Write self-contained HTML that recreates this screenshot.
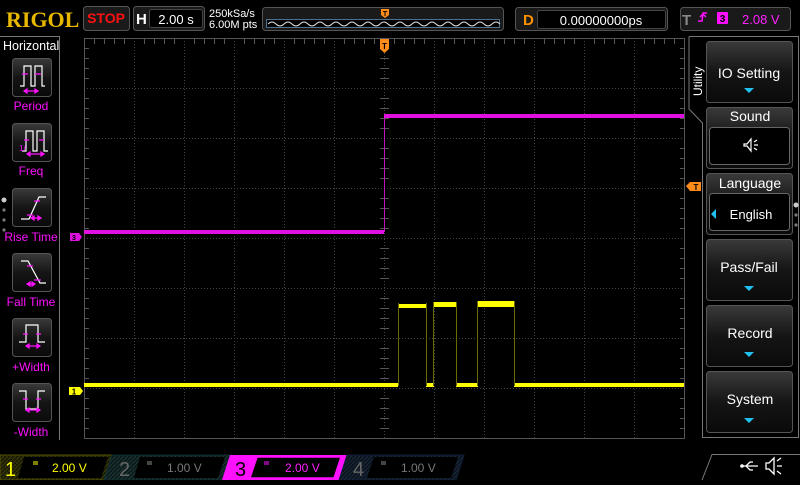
<!DOCTYPE html>
<html><head><meta charset="utf-8"><style>
body{margin:0;background:#000;width:800px;height:480px;overflow:hidden;font-family:"Liberation Sans",sans-serif}
svg text{font-family:"Liberation Sans",sans-serif}
</style></head><body>
<svg width="800" height="480" xmlns="http://www.w3.org/2000/svg">
<defs>
<linearGradient id="btn" x1="0" y1="0" x2="0" y2="1"><stop offset="0" stop-color="#3a3a3a"/><stop offset="0.5" stop-color="#151515"/><stop offset="1" stop-color="#0a0a0a"/></linearGradient>
<pattern id="h1" width="4" height="4" patternUnits="userSpaceOnUse"><rect width="4" height="4" fill="#1c1c00"/><path d="M0 4L4 0" stroke="#3a3a10" stroke-width="1"/></pattern>
<pattern id="h2" width="4" height="4" patternUnits="userSpaceOnUse"><rect width="4" height="4" fill="#0c1c1c"/><path d="M0 4L4 0" stroke="#1f3535" stroke-width="1"/></pattern>
<pattern id="h4" width="4" height="4" patternUnits="userSpaceOnUse"><rect width="4" height="4" fill="#0c1420"/><path d="M0 4L4 0" stroke="#1b2838" stroke-width="1"/></pattern>
</defs>
<!-- header -->
<text x="6" y="27" font-weight="bold" font-size="22" fill="#e8b800" style="font-family:'Liberation Serif',serif">RIGOL</text>
<rect x="83.5" y="6.5" width="46" height="24" rx="3" fill="#1a1a1a" stroke="#555"/>
<text x="106" y="23" text-anchor="middle" font-size="14" font-weight="bold" fill="#ff1010">STOP</text>
<rect x="133.5" y="6.5" width="71" height="24" rx="3" fill="#1a1a1a" stroke="#555"/>
<text x="136" y="24" font-size="15" font-weight="bold" fill="#fff">H</text>
<rect x="149.5" y="9.5" width="53" height="18" rx="2" fill="#000" stroke="#444"/>
<text x="176" y="24" text-anchor="middle" font-size="13" fill="#fff">2.00 s</text>
<text x="209" y="17" font-size="11" fill="#fff">250kSa/s</text>
<text x="209" y="28" font-size="11" fill="#fff">6.00M pts</text>
<rect x="262.5" y="7.5" width="241" height="23" rx="3" fill="#1a1a1a" stroke="#555"/>
<rect x="266.5" y="19.5" width="233" height="8" fill="#000" stroke="#4a7090"/>
<path d="M268 24 q4 -4 8 0 t8 0 t8 0 t8 0 t8 0 t8 0 t8 0 t8 0 t8 0 t8 0 t8 0 t8 0 t8 0 t8 0 t8 0 t8 0 t8 0 t8 0 t8 0 t8 0 t8 0 t8 0 t8 0 t8 0 t8 0 t8 0 t8 0 t8 0 t8 0" stroke="#ddd" fill="none" stroke-width="1"/>
<path d="M381 9h8v6l-4 3l-4-3z" fill="#ff8c1a"/><text x="385" y="16" text-anchor="middle" font-size="7" fill="#000" font-weight="bold">T</text>
<rect x="515.5" y="7.5" width="152" height="23" rx="3" fill="#1a1a1a" stroke="#555"/>
<text x="523" y="25" font-size="15" font-weight="bold" fill="#ff9000">D</text>
<rect x="537.5" y="10.5" width="128" height="18" rx="2" fill="#000" stroke="#444"/>
<text x="601" y="25" text-anchor="middle" font-size="13" fill="#fff">0.00000000ps</text>
<rect x="680.5" y="7.5" width="110" height="23" rx="3" fill="#1a1a1a" stroke="#555"/>
<text x="682" y="25" font-size="15" font-weight="bold" fill="#888">T</text>
<path d="M698 21h4l1-8h4M700 17l3-3l3 3" stroke="#ff10ff" fill="none" stroke-width="1.5"/>
<rect x="717" y="12" width="11" height="12" rx="1" fill="#ff10ff"/><text x="722.5" y="22" text-anchor="middle" font-size="10" fill="#000" font-weight="bold">3</text>
<text x="742" y="24" font-size="13" fill="#ff20ff">2.08 V</text>
<!-- left panel -->
<path d="M0 36.5H59.5V440" stroke="#777" fill="none"/>
<text x="3" y="50" font-size="12.5" fill="#fff">Horizontal</text>
<g fill="url(#btn)" stroke="#555">
<rect x="12.5" y="58.5" width="39" height="38" rx="3"/>
<rect x="12.5" y="123.5" width="39" height="38" rx="3"/>
<rect x="12.5" y="188.5" width="39" height="38" rx="3"/>
<rect x="12.5" y="253.5" width="39" height="38" rx="3"/>
<rect x="12.5" y="318.5" width="39" height="38" rx="3"/>
<rect x="12.5" y="383.5" width="39" height="38" rx="3"/>
</g>
<g stroke="#fff" fill="none" stroke-width="1.2">
<path d="M20 86h4v-20h7v20h4v-20h7v20h3"/>
<path d="M22 151h4v-20h7v20h4v-20h7v20h4"/>
<path d="M21 219h8l10-22h7"/>
<path d="M21 261h7l12 22h6"/>
<path d="M19 342h7v-17h12v17h7"/>
<path d="M19 391h7v18h12v-18h7"/>
</g>
<g stroke="#ff10ff" fill="#ff10ff" stroke-width="1.2">
<path d="M22 74h6M35 74h6M24 91h14"/><path d="M24 91l3-2v4zM38 91l-3-2v4z"/>
<path d="M24 140h5M39 140h5M27 154h17"/><path d="M27 154l3-2v4zM44 154l-3-2v4z"/>
<text x="19" y="151" font-size="8" stroke="none">1/</text>
<path d="M34 201h6M27 215h6M31 218h10"/><path d="M31 218l3-2v4zM41 218l-3-2v4z"/>
<path d="M27 266h6M34 280h7M27 284h8"/><path d="M27 284l3-2v4zM35 284l-3-2v4z"/>
<path d="M23 334h5M36 334h5M26 346h14"/><path d="M26 346l3-2v4zM40 346l-3-2v4z"/>
<path d="M23 399h5M36 399h5M26 410h14"/><path d="M26 410l3-2v4zM40 410l-3-2v4z"/>
</g>
<g font-size="12" fill="#ff10ff" text-anchor="middle">
<text x="31" y="110">Period</text><text x="31" y="175">Freq</text><text x="31" y="241">Rise Time</text>
<text x="31" y="306">Fall Time</text><text x="31" y="371">+Width</text><text x="31" y="436">-Width</text>
</g>
<circle cx="4" cy="200" r="2.5" fill="#ccc"/><circle cx="4" cy="210" r="1.6" fill="#777"/><circle cx="4" cy="220" r="1.6" fill="#777"/><circle cx="4" cy="230" r="1.6" fill="#777"/>
<!-- grid -->
<g stroke="#444" stroke-width="1" stroke-dasharray="1 2">
<path d="M134.5 38V438M184.5 38V438M234.5 38V438M284.5 38V438M334.5 38V438M434.5 38V438M484.5 38V438M534.5 38V438M584.5 38V438M634.5 38V438"/>
<path d="M84 88.5H684M84 138.5H684M84 188.5H684M84 288.5H684M84 338.5H684M84 388.5H684"/>
<path d="M384.5 38V438M84 238.5H684"/>
</g>
<rect x="84.5" y="38.5" width="600" height="400" fill="none" stroke="#555"/>
<g stroke="#555">
<path d="M94.5 39v5M104.5 39v5M114.5 39v5M124.5 39v5M144.5 39v5M154.5 39v5M164.5 39v5M174.5 39v5M194.5 39v5M204.5 39v5M214.5 39v5M224.5 39v5M244.5 39v5M254.5 39v5M264.5 39v5M274.5 39v5M294.5 39v5M304.5 39v5M314.5 39v5M324.5 39v5M344.5 39v5M354.5 39v5M364.5 39v5M374.5 39v5M394.5 39v5M404.5 39v5M414.5 39v5M424.5 39v5M444.5 39v5M454.5 39v5M464.5 39v5M474.5 39v5M494.5 39v5M504.5 39v5M514.5 39v5M524.5 39v5M544.5 39v5M554.5 39v5M564.5 39v5M574.5 39v5M594.5 39v5M604.5 39v5M614.5 39v5M624.5 39v5M644.5 39v5M654.5 39v5M664.5 39v5M674.5 39v5"/>
<path d="M85 48.5h4M85 58.5h4M85 68.5h4M85 78.5h4M85 98.5h4M85 108.5h4M85 118.5h4M85 128.5h4M85 148.5h4M85 158.5h4M85 168.5h4M85 178.5h4M85 198.5h4M85 208.5h4M85 218.5h4M85 228.5h4M85 248.5h4M85 258.5h4M85 268.5h4M85 278.5h4M85 298.5h4M85 308.5h4M85 318.5h4M85 328.5h4M85 348.5h4M85 358.5h4M85 368.5h4M85 378.5h4M85 398.5h4M85 408.5h4M85 418.5h4M85 428.5h4"/>
<path d="M380 48.5h9M380 58.5h9M380 68.5h9M380 78.5h9M380 98.5h9M380 108.5h9M380 118.5h9M380 128.5h9M380 148.5h9M380 158.5h9M380 168.5h9M380 178.5h9M380 198.5h9M380 208.5h9M380 218.5h9M380 228.5h9M380 248.5h9M380 258.5h9M380 268.5h9M380 278.5h9M380 298.5h9M380 308.5h9M380 318.5h9M380 328.5h9M380 348.5h9M380 358.5h9M380 368.5h9M380 378.5h9M380 398.5h9M380 408.5h9M380 418.5h9M380 428.5h9"/>
<path d="M680 48.5h4M680 58.5h4M680 68.5h4M680 78.5h4M680 98.5h4M680 108.5h4M680 118.5h4M680 128.5h4M680 148.5h4M680 158.5h4M680 168.5h4M680 178.5h4M680 198.5h4M680 208.5h4M680 218.5h4M680 228.5h4M680 248.5h4M680 258.5h4M680 268.5h4M680 278.5h4M680 298.5h4M680 308.5h4M680 318.5h4M680 328.5h4M680 348.5h4M680 358.5h4M680 368.5h4M680 378.5h4M680 398.5h4M680 408.5h4M680 418.5h4M680 428.5h4"/></g>
<!-- traces -->
<rect x="84" y="230" width="300" height="4" fill="#e010e0"/>
<rect x="384" y="114" width="300" height="4" fill="#e010e0"/>
<path d="M384.5 118V232" stroke="#c010c0"/>
<rect x="84" y="383" width="314" height="4" fill="#ffff00"/>
<rect x="426" y="383" width="8" height="4" fill="#ffff00"/>
<rect x="456" y="383" width="22" height="4" fill="#ffff00"/>
<rect x="514" y="383" width="170" height="4" fill="#ffff00"/>
<rect x="398" y="304" width="28" height="4" fill="#ffff00"/>
<rect x="434" y="302" width="22" height="5" fill="#ffff00"/>
<rect x="477" y="301" width="38" height="6" fill="#ffff00"/>
<path d="M398.5 303V386M426.5 303V386M433.5 302V386M456.5 302V386M477.5 301V386M514.5 301V386" stroke="#6a6a00"/>
<!-- markers -->
<path d="M380 39h9v10l-4.5 4l-4.5-4z" fill="#ff8c1a"/><text x="384.5" y="49" text-anchor="middle" font-size="8" font-weight="bold" fill="#000">T</text>
<path d="M70 233h9l3 4l-3 4h-9z" fill="#e010e0"/><text x="74" y="240" text-anchor="middle" font-size="7" font-weight="bold" fill="#000">3</text>
<path d="M69 387h11l3 4l-3 4h-11z" fill="#ffff00"/><text x="74" y="394.5" text-anchor="middle" font-size="8" font-weight="bold" fill="#000">1</text>
<path d="M686 186l4-4h11v9h-11z" fill="#ff8c1a"/><text x="696" y="190" text-anchor="middle" font-size="8" font-weight="bold" fill="#000">T</text>
<!-- right panel -->
<path d="M689 36.5H798.5V437.5H702.5V123L689 109V36.5" stroke="#777" fill="none"/>
<text transform="translate(702,96) rotate(-90)" font-size="12" fill="#fff">Utility</text>
<g fill="url(#btn)" stroke="#555">
<rect x="706.5" y="41.5" width="86" height="61" rx="3"/>
<rect x="706.5" y="107.5" width="86" height="61" rx="3"/>
<rect x="706.5" y="173.5" width="86" height="61" rx="3"/>
<rect x="706.5" y="239.5" width="86" height="61" rx="3"/>
<rect x="706.5" y="305.5" width="86" height="61" rx="3"/>
<rect x="706.5" y="371.5" width="86" height="61" rx="3"/>
</g>
<rect x="709.5" y="127.5" width="80" height="37" rx="3" fill="#000" stroke="#666"/>
<rect x="709.5" y="193.5" width="80" height="37" rx="3" fill="#000" stroke="#666"/>
<g font-size="14" fill="#fff" text-anchor="middle">
<text x="749" y="78">IO Setting</text>
<text x="750" y="121">Sound</text>
<text x="750" y="188">Language</text>
<text x="751" y="219" font-size="13">English</text>
<text x="749" y="272">Pass/Fail</text>
<text x="750" y="338">Record</text>
<text x="750" y="404">System</text>
</g>
<g fill="#20c0f0">
<path d="M744 88h10l-5 5z"/><path d="M744 286h10l-5 5z"/><path d="M744 352h10l-5 5z"/><path d="M744 418h10l-5 5z"/>
<path d="M716 209v10l-5-5z"/>
</g>
<g stroke="#fff" fill="none" stroke-width="1.2"><path d="M744 144h3l4-5v12l-4-5h-3z"/><path d="M754 142l3-2M754 145h4M754 148l3 2"/></g>
<circle cx="796" cy="205" r="2.5" fill="#ccc"/><circle cx="796" cy="215" r="1.6" fill="#777"/><circle cx="796" cy="225" r="1.6" fill="#777"/>
<!-- bottom channel tabs -->
<path d="M0 455H112L104 480H0z" fill="url(#h1)" stroke="#555500"/>
<path d="M24 457H108L101 478H18z" fill="#000"/>
<text x="5" y="476" font-size="20" fill="#ffff00">1</text>
<path d="M33 462h5M33 464h5" stroke="#ffff00"/>
<text x="52" y="472" font-size="12" fill="#ffff00">2.00 V</text>
<path d="M112 455H230L222 480H104z" fill="url(#h2)" stroke="#0c3030"/>
<path d="M140 457H225L218 478H134z" fill="#000"/>
<text x="119" y="476" font-size="20" fill="#666">2</text>
<path d="M147 462h5M147 464h5" stroke="#888"/>
<text x="167" y="472" font-size="12" fill="#777">1.00 V</text>
<path d="M230 455H347L339 480H222z" fill="#ff10ff"/>
<path d="M257 457H341L334 478H250z" fill="#000" stroke="#ff10ff" stroke-width="1.5"/>
<text x="235" y="476" font-size="20" fill="#000">3</text>
<path d="M264 462h5M264 464h5" stroke="#ff10ff"/>
<text x="285" y="472" font-size="12" fill="#ff20ff">2.00 V</text>
<path d="M347 455H464L456 480H339z" fill="url(#h4)" stroke="#10203a"/>
<path d="M374 457H458L451 478H367z" fill="#000"/>
<text x="353" y="476" font-size="20" fill="#666">4</text>
<path d="M381 462h5M381 464h5" stroke="#888"/>
<text x="401" y="472" font-size="12" fill="#777">1.00 V</text>
<path d="M702 480L712 454.5H800" stroke="#777" fill="none"/>
<g stroke="#fff" fill="none" stroke-width="1.3"><path d="M742 466h16M746 466l4-4h3M746 466l4 4h3"/><path d="M766 463h3l5-5v16l-5-5h-3z"/><path d="M777 461l4-3M777 466h5M777 471l4 3"/></g>
<circle cx="742" cy="466" r="1.8" fill="#fff"/>
</svg>
</body></html>
